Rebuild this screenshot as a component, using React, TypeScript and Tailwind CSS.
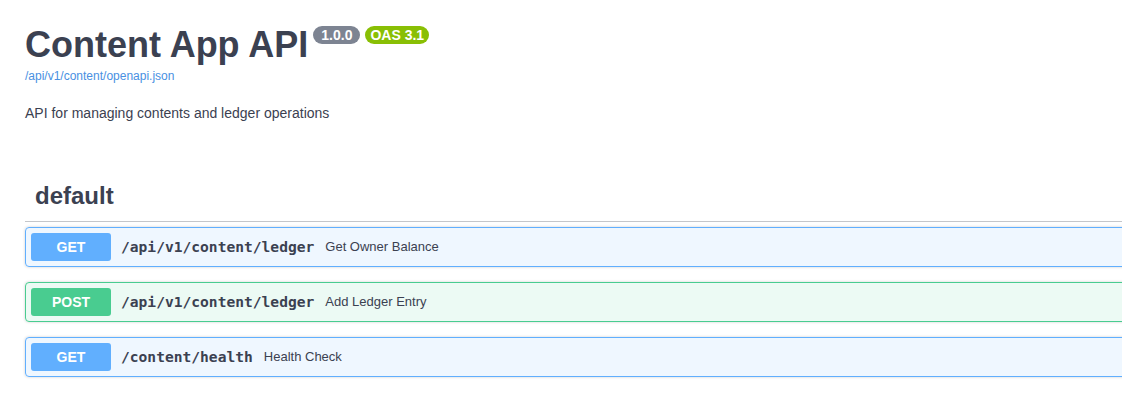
import React from "react";

type Op = { method: "GET" | "POST"; path: string; desc: string };

const ops: Op[] = [
  { method: "GET", path: "/api/v1/content/ledger", desc: "Get Owner Balance" },
  { method: "POST", path: "/api/v1/content/ledger", desc: "Add Ledger Entry" },
  { method: "GET", path: "/content/health", desc: "Health Check" },
];

function OpBlock({ op }: { op: Op }) {
  const isGet = op.method === "GET";
  return (
    <div
      className={
        isGet
          ? "mb-[15px] flex items-center rounded-[4px] border border-[#61affe] bg-[rgba(97,175,254,0.1)] p-[5px] shadow-[0_0_3px_rgba(0,0,0,0.19)]"
          : "mb-[15px] flex items-center rounded-[4px] border border-[#49cc90] bg-[rgba(73,204,144,0.1)] p-[5px] shadow-[0_0_3px_rgba(0,0,0,0.19)]"
      }
    >
      <span
        className={
          isGet
            ? "w-[80px] rounded-[3px] bg-[#61affe] py-[6px] text-center text-[14px] leading-[16px] font-bold text-white"
            : "w-[80px] rounded-[3px] bg-[#49cc90] py-[6px] text-center text-[14px] leading-[16px] font-bold text-white"
        }
      >
        {op.method}
      </span>
      <span className="px-[10px] font-['DejaVu_Sans_Mono',monospace] text-[14.6px] font-bold text-[#3b4151]">
        {op.path}
      </span>
      <span className="pl-px text-[13px] text-[#3b4151]">{op.desc}</span>
    </div>
  );
}

export default function App() {
  return (
    <div className="h-[418px] w-[1122px] overflow-hidden bg-white font-['Liberation_Sans',Arial,sans-serif] text-[#3b4151]">
      <div className="w-[1300px] pl-[25px] pt-[24px]">
        <div className="flex items-start">
          <h2 className="text-[36px] leading-[41px] font-bold text-[#3b4151]">Content App API</h2>
          <span className="ml-[5px] mt-[2px] rounded-full bg-[#7d8492] px-[8px] py-[2px] text-[14px] leading-[14px] font-bold text-white">
            1.0.0
          </span>
          <span className="ml-[5px] mt-[2px] rounded-full bg-[#89bf04] px-[5px] py-[2px] text-[14px] leading-[14px] font-bold text-white">
            OAS 3.1
          </span>
        </div>
        <div className="mt-[4px] text-[12px] leading-[14px] text-[#4990e2]">/api/v1/content/openapi.json</div>
        <p className="mt-[22px] text-[14px] leading-[16px] text-[#3b4151]">
          API for managing contents and ledger operations
        </p>

        <div className="mt-[50px] border-b border-[rgba(59,65,81,0.3)] py-[10px] pl-[10px]">
          <h3 className="text-[24px] leading-[30px] font-bold text-[#3b4151]">default</h3>
        </div>
        <div className="mt-[5px]">
          {ops.map((op, i) => (
            <OpBlock key={i} op={op} />
          ))}
        </div>
      </div>
    </div>
  );
}
